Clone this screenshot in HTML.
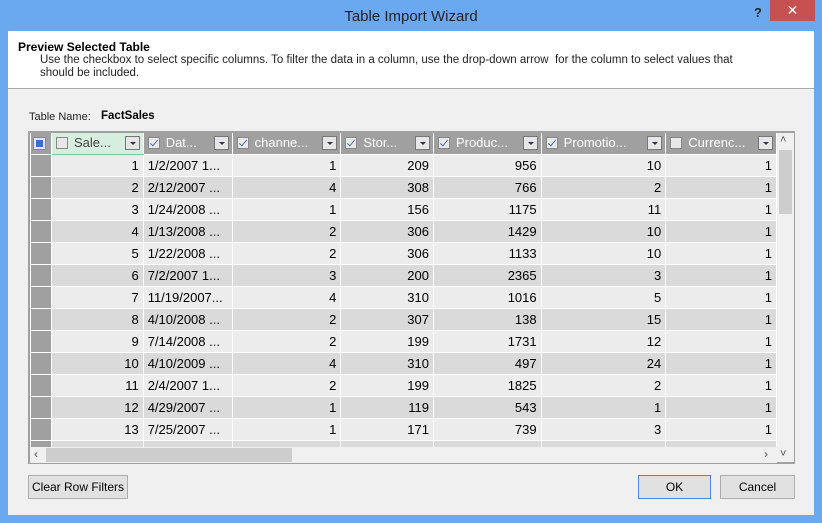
<!DOCTYPE html><html><head><style>
*{box-sizing:border-box;margin:0;padding:0}
body{width:822px;height:523px;background:#6aa9f0;font-family:"Liberation Sans",sans-serif;font-size:12px;position:relative;overflow:hidden;color:#000}
.a{position:absolute}
.title{left:0;top:8px;width:822px;text-align:center;font-size:15px;color:#222}
.client{left:8px;top:31px;width:806px;height:484px;background:#f0f0f0}
.hdr{left:8px;top:31px;width:806px;height:58px;background:#fff;border-bottom:1px solid #aaa}
table{border-collapse:collapse;table-layout:fixed;position:absolute;left:30px;top:133px}
td{height:22px;border:1px solid #fff;text-align:right;padding:0 4px;font-size:13px;white-space:nowrap;overflow:hidden}
tr.o td{background:#ececec}tr.e td{background:#dadada}
td.rh{background:#a0a0a0!important}
th{height:21px;background:#a0a0a0;color:#fff;font-weight:normal;text-align:left;font-size:13px;border:1px solid #fff;border-top:0;padding-left:4px;position:relative;white-space:nowrap;overflow:hidden;line-height:20px;vertical-align:middle}
.cb{position:relative;display:inline-block;width:12px;height:12px;background:#e8e8e8;border:1px solid #888;vertical-align:middle;margin-right:6px;margin-top:-2px;overflow:hidden}
.cb.k:after{content:"";position:absolute;left:3px;top:0px;width:3px;height:7px;border-right:1.5px solid #4a70b0;border-bottom:1.5px solid #4a70b0;transform:rotate(40deg)}
.dd{position:absolute;right:3px;top:3px;width:15px;height:14px;background:#e6e6e6;border:1px solid #777}
.dd:after{content:"";position:absolute;left:4px;top:5px;border:3px solid transparent;border-top:3px solid #334;}
.btn{background:#e1e1e1;border:1px solid #adadad;text-align:center;line-height:22px;font-size:12px}
</style></head><body>
<div class="a title">Table Import Wizard</div>
<div class="a" style="left:754px;top:5px;font-weight:bold;font-size:13px;color:#222">?</div>
<div class="a" style="left:770px;top:0;width:45px;height:21px;background:#c75050;color:#fff;text-align:center;font-size:14px;line-height:21px">✕</div>
<div class="a client"></div>
<div class="a hdr"></div>
<div class="a" style="left:18px;top:40px;font-weight:bold;font-size:12px">Preview Selected Table</div>
<div class="a" style="left:40px;top:54px;font-size:11.5px;line-height:13px;color:#222;width:700px">Use the checkbox to select specific columns. To filter the data in a column, use the drop-down arrow&nbsp; for the column to select values that should be included.</div>
<div class="a" style="left:29px;top:111px;font-size:11px;color:#222">Table Name:</div>
<div class="a" style="left:101px;top:110px;font-size:11.5px;font-weight:bold">FactSales</div>
<div class="a" style="left:28px;top:131px;width:767px;height:333px;background:#f0f0f0;border:2px solid #a0a0a0;border-right-width:1px"></div>
<div class="a" style="left:30px;top:133px;width:747px;height:314px;overflow:hidden">
<table style="left:0;top:0">
<colgroup><col style="width:21px"><col style="width:92px"><col style="width:89px"><col style="width:109px"><col style="width:93px"><col style="width:108px"><col style="width:125px"><col style="width:111px"></colgroup>
<tr><th style="padding-left:3px"><span class="cb" style="background:#3a6fc8;border:2px solid #dfe6f0;outline:1px solid #888;width:11px;height:11px;margin-top:-1px"></span></th>
<th style="background:#d6eedd;color:#444;border-bottom:1px solid #7cc79a"><span class="cb"></span>Sale...<span class="dd"></span></th>
<th><span class="cb k"></span>Dat...<span class="dd"></span></th>
<th><span class="cb k"></span>channe...<span class="dd"></span></th>
<th><span class="cb k"></span>Stor...<span class="dd"></span></th>
<th><span class="cb k"></span>Produc...<span class="dd"></span></th>
<th><span class="cb k"></span>Promotio...<span class="dd"></span></th>
<th><span class="cb"></span>Currenc...<span class="dd"></span></th></tr>
<tr class="o"><td class="rh"></td><td>1</td><td style="text-align:left">1/2/2007 1...</td><td>1</td><td>209</td><td>956</td><td>10</td><td>1</td></tr>
<tr class="e"><td class="rh"></td><td>2</td><td style="text-align:left">2/12/2007 ...</td><td>4</td><td>308</td><td>766</td><td>2</td><td>1</td></tr>
<tr class="o"><td class="rh"></td><td>3</td><td style="text-align:left">1/24/2008 ...</td><td>1</td><td>156</td><td>1175</td><td>11</td><td>1</td></tr>
<tr class="e"><td class="rh"></td><td>4</td><td style="text-align:left">1/13/2008 ...</td><td>2</td><td>306</td><td>1429</td><td>10</td><td>1</td></tr>
<tr class="o"><td class="rh"></td><td>5</td><td style="text-align:left">1/22/2008 ...</td><td>2</td><td>306</td><td>1133</td><td>10</td><td>1</td></tr>
<tr class="e"><td class="rh"></td><td>6</td><td style="text-align:left">7/2/2007 1...</td><td>3</td><td>200</td><td>2365</td><td>3</td><td>1</td></tr>
<tr class="o"><td class="rh"></td><td>7</td><td style="text-align:left">11/19/2007...</td><td>4</td><td>310</td><td>1016</td><td>5</td><td>1</td></tr>
<tr class="e"><td class="rh"></td><td>8</td><td style="text-align:left">4/10/2008 ...</td><td>2</td><td>307</td><td>138</td><td>15</td><td>1</td></tr>
<tr class="o"><td class="rh"></td><td>9</td><td style="text-align:left">7/14/2008 ...</td><td>2</td><td>199</td><td>1731</td><td>12</td><td>1</td></tr>
<tr class="e"><td class="rh"></td><td>10</td><td style="text-align:left">4/10/2009 ...</td><td>4</td><td>310</td><td>497</td><td>24</td><td>1</td></tr>
<tr class="o"><td class="rh"></td><td>11</td><td style="text-align:left">2/4/2007 1...</td><td>2</td><td>199</td><td>1825</td><td>2</td><td>1</td></tr>
<tr class="e"><td class="rh"></td><td>12</td><td style="text-align:left">4/29/2007 ...</td><td>1</td><td>119</td><td>543</td><td>1</td><td>1</td></tr>
<tr class="o"><td class="rh"></td><td>13</td><td style="text-align:left">7/25/2007 ...</td><td>1</td><td>171</td><td>739</td><td>3</td><td>1</td></tr>
<tr class="e"><td class="rh"></td><td></td><td></td><td></td><td></td><td></td><td></td><td></td></tr>
</table></div>
<div class="a" style="left:777px;top:133px;width:17px;height:314px;background:#f0f0f0"></div>
<div class="a" style="left:779px;top:150px;width:13px;height:64px;background:#cdcdcd"></div>
<div class="a" style="left:780px;top:134px;font-size:11px;color:#555">˄</div>
<div class="a" style="left:780px;top:448px;font-size:11px;color:#555">˅</div>
<div class="a" style="left:30px;top:447px;width:747px;height:16px;background:#f0f0f0"></div>
<div class="a" style="left:46px;top:448px;width:246px;height:14px;background:#cdcdcd"></div>
<div class="a" style="left:34px;top:447px;font-size:12px;color:#555">‹</div>
<div class="a" style="left:764px;top:447px;font-size:12px;color:#555">›</div>
<div class="a btn" style="left:28px;top:475px;width:100px;height:24px">Clear Row Filters</div>
<div class="a btn" style="left:638px;top:475px;width:73px;height:24px;border-color:#3c8fe0">OK</div>
<div class="a btn" style="left:720px;top:475px;width:75px;height:24px">Cancel</div>
</body></html>
